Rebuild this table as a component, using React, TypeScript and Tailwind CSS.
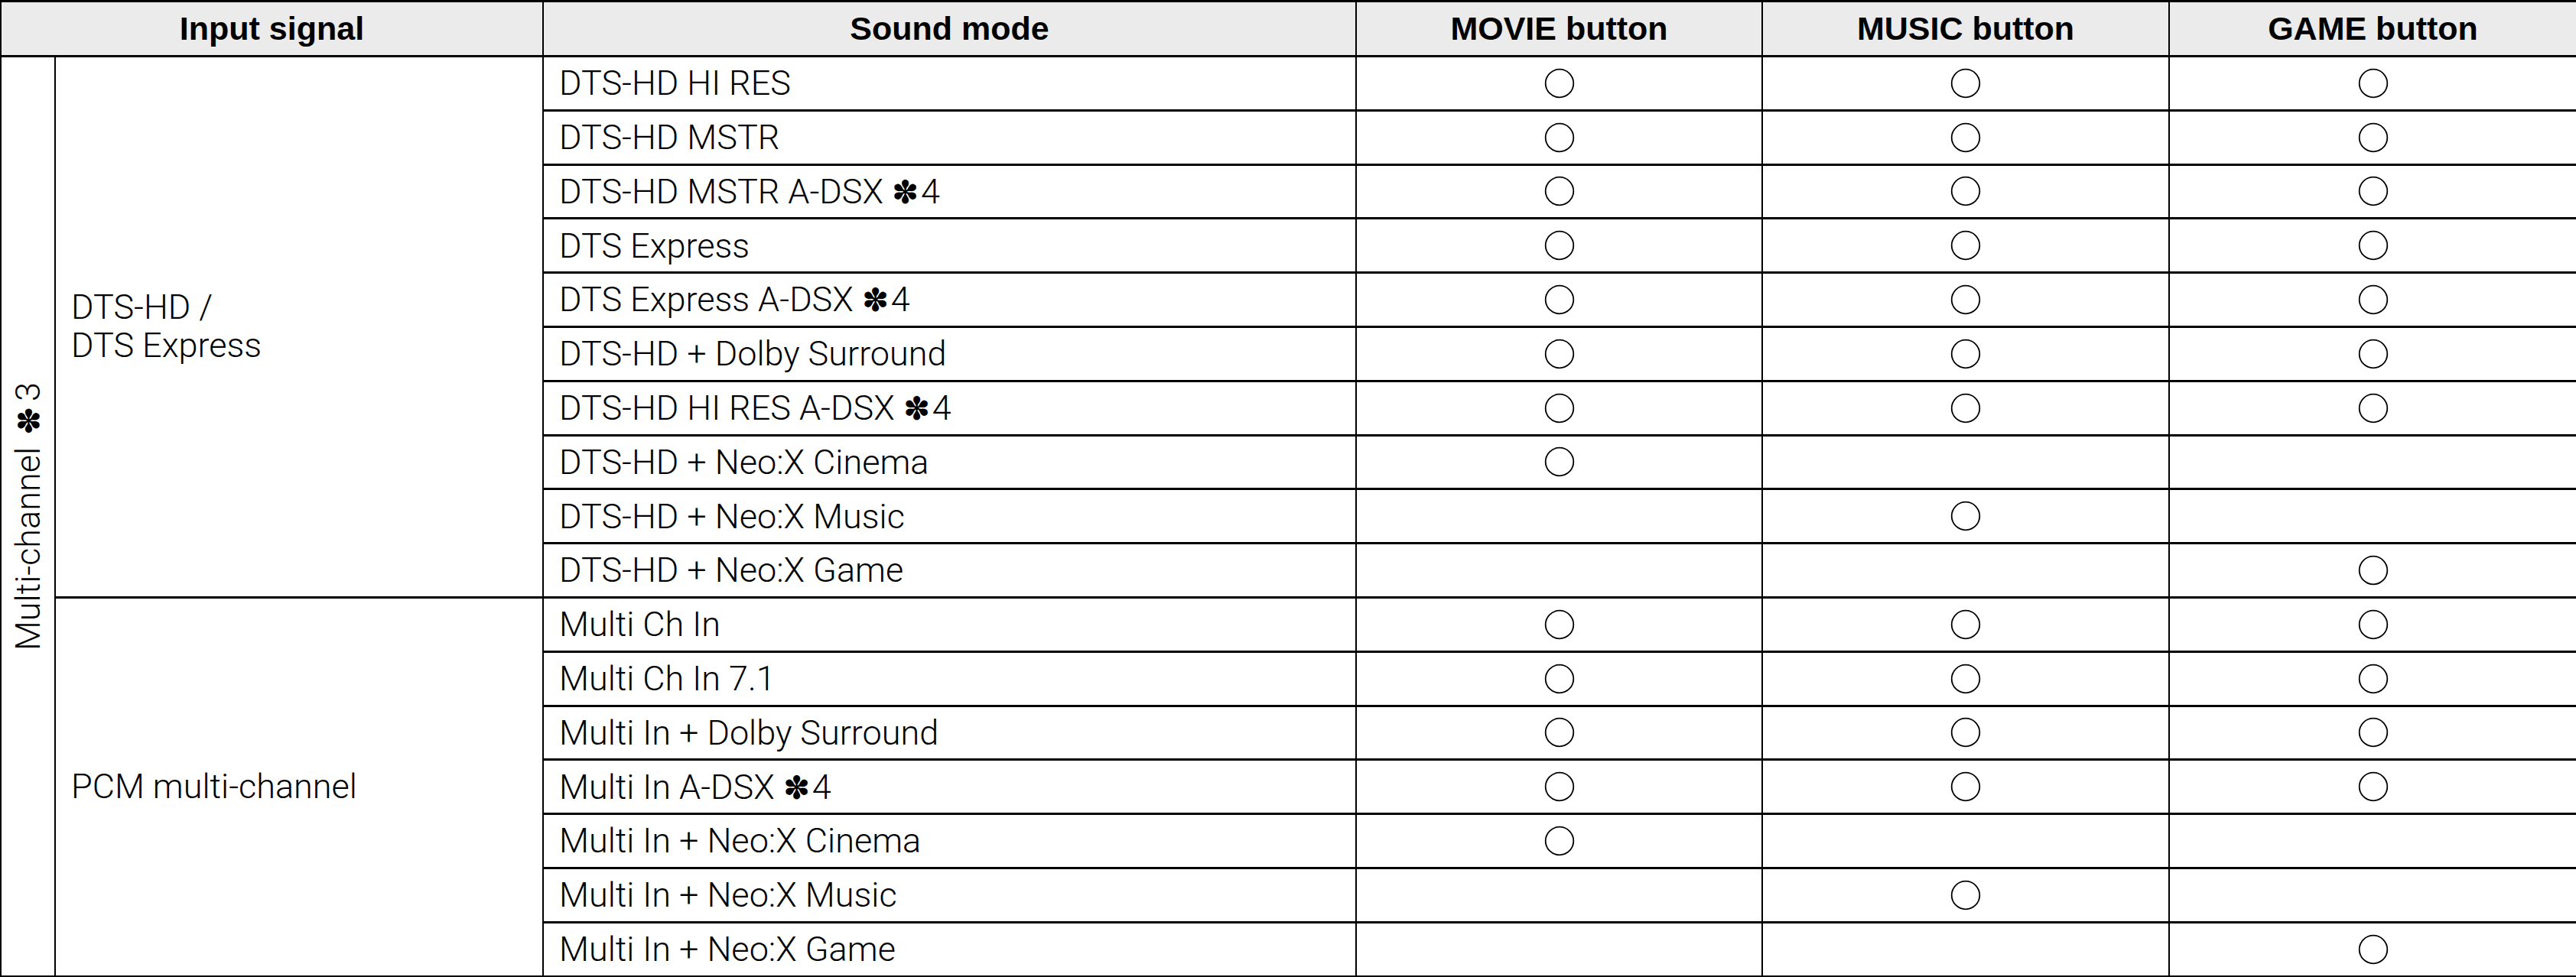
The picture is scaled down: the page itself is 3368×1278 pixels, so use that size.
import React from 'react';

type Row = { mode: React.ReactNode; marks: [boolean, boolean, boolean] };

const Star: React.FC = () => (
  <span className="inline-block align-baseline font-['DejaVu_Sans',sans-serif] text-[42px] leading-none mr-[3px]">✽</span>
);

const Mark: React.FC = () => (
  <svg width="40" height="40" viewBox="0 0 40 40" className="mx-auto block">
    <circle cx="20" cy="20" r="18.3" fill="none" stroke="#000" strokeWidth="1.8" />
  </svg>
);

const dtsRows: Row[] = [
  { mode: 'DTS-HD HI RES', marks: [true, true, true] },
  { mode: 'DTS-HD MSTR', marks: [true, true, true] },
  { mode: <>DTS-HD MSTR A-DSX <Star />4</>, marks: [true, true, true] },
  { mode: 'DTS Express', marks: [true, true, true] },
  { mode: <>DTS Express A-DSX <Star />4</>, marks: [true, true, true] },
  { mode: 'DTS-HD + Dolby Surround', marks: [true, true, true] },
  { mode: <>DTS-HD HI RES A-DSX <Star />4</>, marks: [true, true, true] },
  { mode: 'DTS-HD + Neo:X Cinema', marks: [true, false, false] },
  { mode: 'DTS-HD + Neo:X Music', marks: [false, true, false] },
  { mode: 'DTS-HD + Neo:X Game', marks: [false, false, true] },
];

const pcmRows: Row[] = [
  { mode: 'Multi Ch In', marks: [true, true, true] },
  { mode: 'Multi Ch In 7.1', marks: [true, true, true] },
  { mode: 'Multi In + Dolby Surround', marks: [true, true, true] },
  { mode: <>Multi In A-DSX <Star />4</>, marks: [true, true, true] },
  { mode: 'Multi In + Neo:X Cinema', marks: [true, false, false] },
  { mode: 'Multi In + Neo:X Music', marks: [false, true, false] },
  { mode: 'Multi In + Neo:X Game', marks: [false, false, true] },
];

const cell = 'border-x-2 border-y-[3px] border-black';
const head = 'border-x-2 border-y-[3px] border-black bg-[#ebebeb] font-["Liberation_Sans",Arial,sans-serif] font-bold text-[43px] text-center';

const App: React.FC = () => {
  const renderRows = (rows: Row[], label: React.ReactNode, first: boolean) =>
    rows.map((row, i) => (
      <tr key={i} className="h-[70.8px]">
        {first && i === 0 && (
          <td rowSpan={17} className={`${cell} p-0 align-middle`}>
            <div className="flex items-center justify-center">
              <span className="[writing-mode:vertical-rl] rotate-180 whitespace-nowrap">
                Multi-channel <Star />3
              </span>
            </div>
          </td>
        )}
        {i === 0 && (
          <td rowSpan={rows.length} className={`${cell} pl-[20px] align-middle leading-[50px]`}>
            {label}
          </td>
        )}
        <td className={`${cell} pl-[20px] whitespace-nowrap`}>{row.mode}</td>
        {row.marks.map((m, j) => (
          <td key={j} className={cell}>
            {m && <Mark />}
          </td>
        ))}
      </tr>
    ));

  return (
    <div className="w-[3368px] h-[1278px] bg-white overflow-hidden">
      <table className="table-fixed border-collapse w-[3368px] font-['Roboto','Liberation_Sans',sans-serif] font-light text-[45px] text-black">
        <colgroup>
          <col className="w-[71px]" />
          <col className="w-[638px]" />
          <col className="w-[1063px]" />
          <col className="w-[531px]" />
          <col className="w-[532px]" />
          <col className="w-[533px]" />
        </colgroup>
        <thead>
          <tr className="h-[72px]">
            <th colSpan={2} className={head}>Input signal</th>
            <th className={head}>Sound mode</th>
            <th className={head}>MOVIE button</th>
            <th className={head}>MUSIC button</th>
            <th className={head}>GAME button</th>
          </tr>
        </thead>
        <tbody>
          {renderRows(dtsRows, <>DTS-HD /<br />DTS Express</>, true)}
          {renderRows(pcmRows, 'PCM multi-channel', false)}
        </tbody>
      </table>
    </div>
  );
};

export default App;
